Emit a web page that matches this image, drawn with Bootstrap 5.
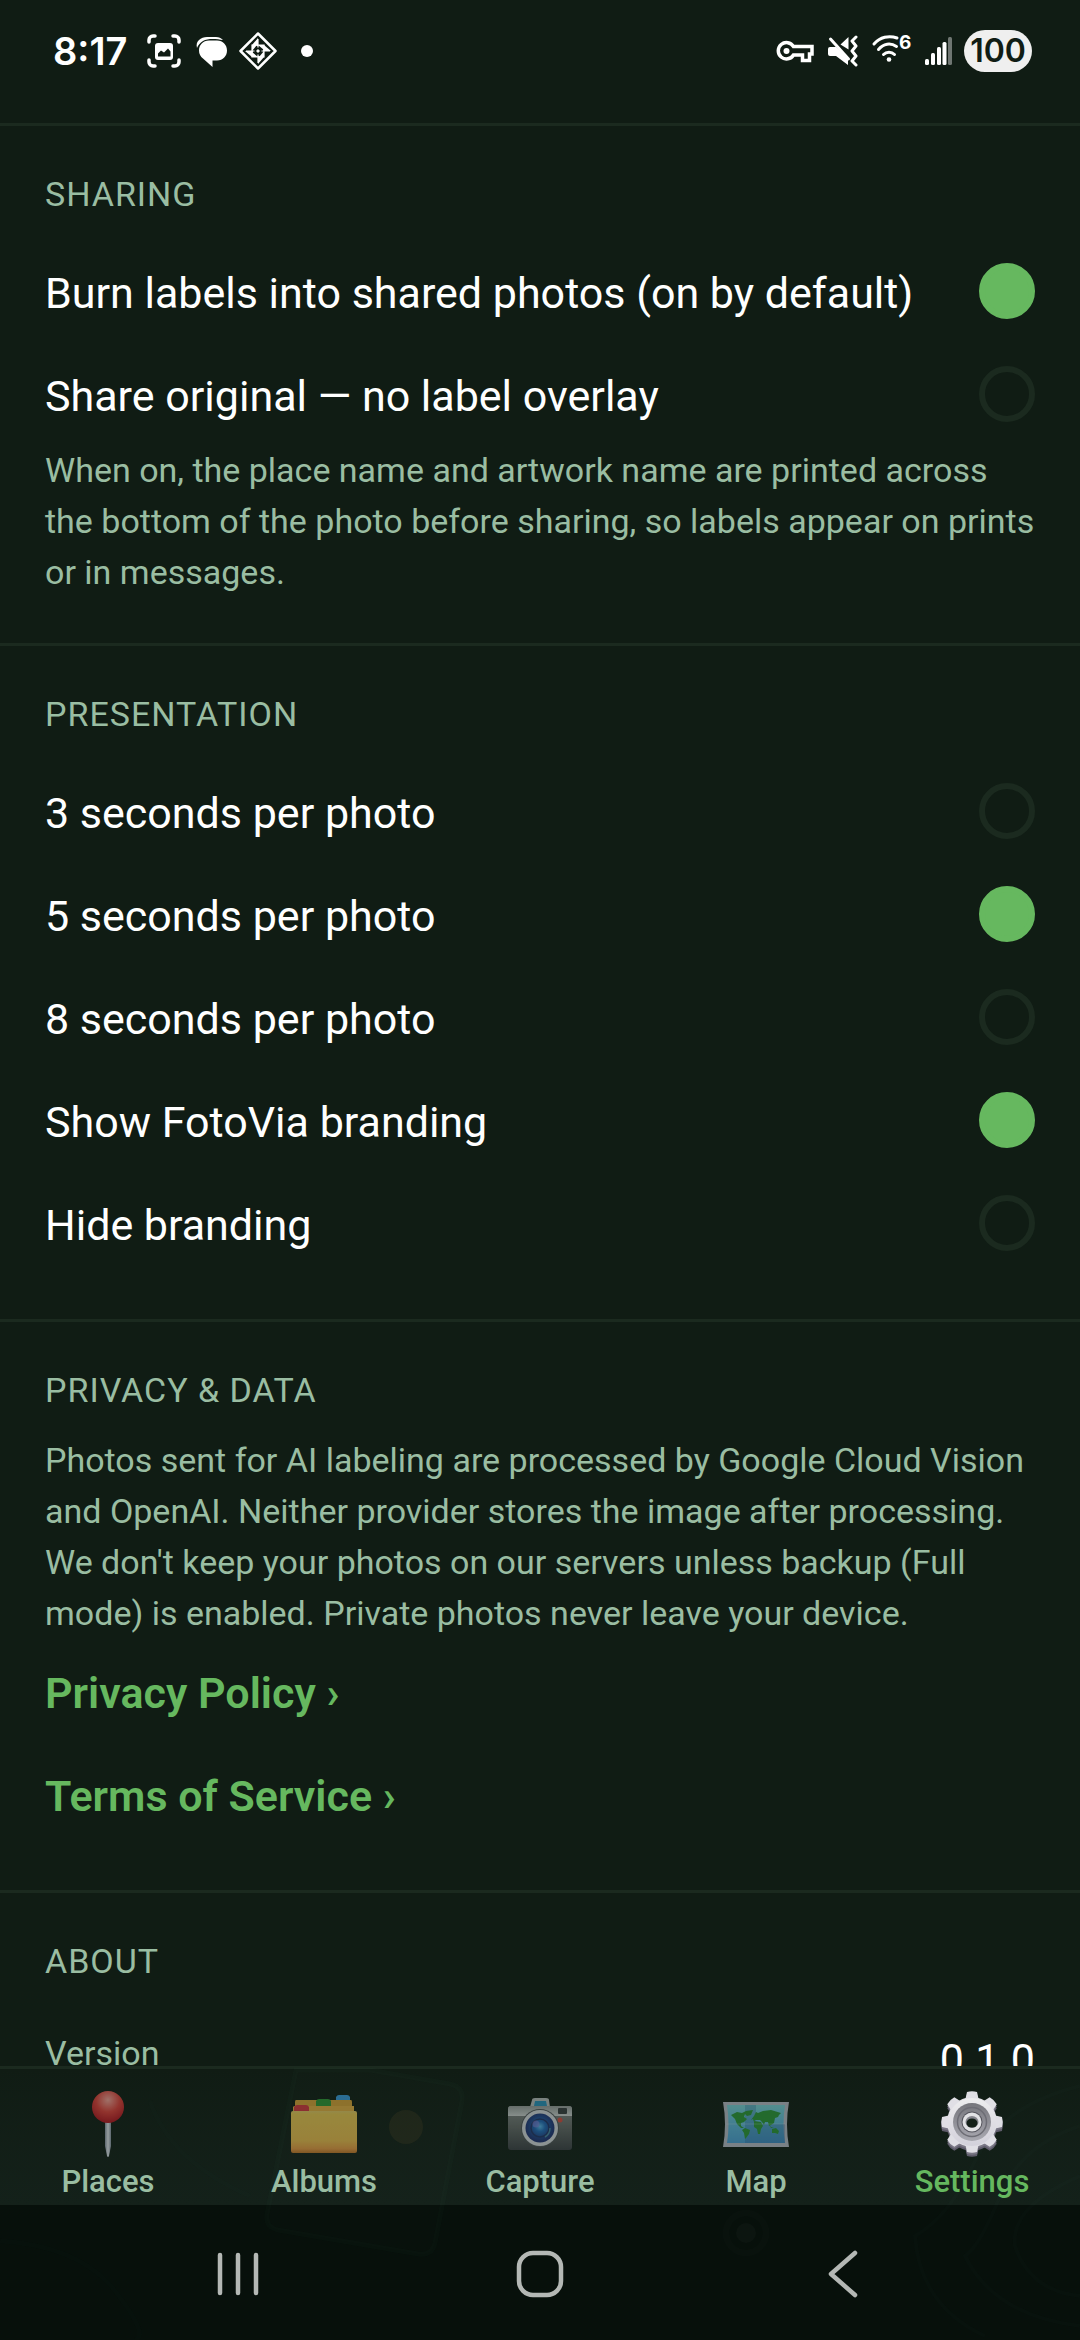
<!DOCTYPE html>
<html lang="en" data-bs-theme="dark">
<head>
<meta charset="utf-8">
<meta name="viewport" content="width=device-width, initial-scale=1">
<title>FotoVia – Settings</title>
<link rel="stylesheet" href="https://cdn.jsdelivr.net/npm/bootstrap@5.3.0/dist/css/bootstrap.min.css">
<style>
  :root { --ink: #101c14; --line: #1b2a1f; --sage: #9abda2; --leaf: #66b85f; }
  body { background: var(--ink); color: #fff; font-family: Roboto, "Noto Sans", sans-serif; }

  /* system status bar */
  .status { height: 123px; padding: 0 48px 21px 53px; font-family: Inter, Roboto, sans-serif; }
  .clock { font-size: 38px; line-height: 48px; font-weight: 600; width: 83px; }
  .status-left { gap: 10px; }
  .status-right { gap: 12px; }
  .more-dot { width: 12px; height: 12px; background: #fff; margin-left: 13px; }
  .battery { width: 68px; height: 42px; background: #efefef; color: var(--ink); font-size: 32px; line-height: 42px; font-weight: 600; }
  .wifi-gen { font: 700 19px Inter, sans-serif; }

  /* settings sections */
  .settings { min-height: 0; scrollbar-width: none; }
  .group { border: 0; border-top: 3px solid var(--line); padding: 48px 45px 45px; }
  .group-title { font-size: 34px; line-height: 40px; font-weight: 400; letter-spacing: 1px; color: var(--sage); margin: 0 0 25px; }
  .opt { height: 103px; font-size: 43px; line-height: 50px; }
  .opt-text { padding-top: 4px; }
  .opt .form-check-input { width: 56px; height: 56px; margin: 0; border: 6px solid var(--line); background-color: transparent; }
  .opt .form-check-input:checked { background-color: var(--leaf); border-color: var(--leaf); background-image: none; }
  .note { font-size: 34px; line-height: 51px; color: var(--sage); margin: 0; }
  .opt a { color: var(--leaf); font-weight: 600; }
  .info { padding: 28px 0; font-size: 43px; line-height: 50px; }
  .info dt { font-size: 34px; line-height: 38px; font-weight: 400; color: var(--sage); }
  .info dd { margin: 0; }

  /* bottom bars */
  .tabs { border-top: 3px solid var(--line); background: linear-gradient(#101c14, #14211a); }
  .tabs .nav-link { padding: 22px 0 5px; color: var(--sage); font-size: 31px; line-height: 36px; font-weight: 500; gap: 7px; }
  .tabs .nav-link svg { opacity: .6; }
  .tabs .nav-link.active { color: var(--leaf); }
  .tabs .nav-link.active svg { opacity: 1; }
  .sysnav { height: 135px; background: #07100b; }
  .sysnav button { width: 28%; background: none; border: 0; padding: 3px 0 0; }
  .backdrop { pointer-events: none; }
</style>
<script src="https://cdn.jsdelivr.net/npm/bootstrap@5.3.0/dist/js/bootstrap.bundle.min.js"></script>
</head>
<body>
<div class="d-flex flex-column vh-100 overflow-hidden">

  <header class="status d-flex justify-content-between align-items-center flex-shrink-0">
    <div class="status-left d-flex align-items-center">
      <span class="clock">8:17</span>
      <svg width="36" height="36" viewBox="0 0 36 36" fill="none" stroke="#fff" stroke-width="3.500" stroke-linecap="round" aria-hidden="true">
        <path d="M3 9V7a4 4 0 0 1 4-4h2M27 3h2a4 4 0 0 1 4 4v2M33 27v2a4 4 0 0 1-4 4h-2M9 33H7a4 4 0 0 1-4-4v-2"/>
        <rect x="9" y="10" width="18" height="17" rx="3" fill="#fff" stroke="none"/>
        <path d="M12 23.500v-3l3-3 3 2 4-4 2.500 3v5z" fill="#101c14" stroke="none"/>
      </svg>
      <svg width="36" height="36" viewBox="0 0 36 36" aria-hidden="true">
        <path fill="#fff" d="M5 15C3 8 9 4 15 4h9c3 0 5 1 7 3-6-1-15-2-20 1-3 2-5 4-6 7z"/>
        <path fill="#fff" d="M17 7.500h8c6 0 10 4.500 10 10s-4 10-10 10h-4.500V34L11 25.500C8.500 23.500 7 21 7 17.500c0-5.500 4-10 10-10z"/>
      </svg>
      <svg width="40" height="40" viewBox="0 0 40 40" aria-hidden="true">
        <path fill="none" stroke="#fff" stroke-width="2.500" stroke-linejoin="round" d="M20 2.500 37.500 20 20 37.500 2.500 20z"/>
        <path fill="none" stroke="#fff" stroke-width="1.200" d="M20 8v24M8 20h24M14 14h12v12H14z"/>
        <path fill="#fff" d="M20 7v8l-6-1zM33 20h-8l1-6zM20 33v-8l6 1zM7 20h8l-1 6zM14 20v-6h5zM20 14h6v5zM26 20v6h-5zM20 26h-6v-5z"/>
        <path fill="#101c14" d="M20 16l4 4-4 4-4-4z"/><path fill="#fff" d="M20 18l2 2-2 2-2-2z"/>
      </svg>
      <span class="more-dot rounded-circle"></span>
    </div>
    <div class="status-right d-flex align-items-center">
      <svg width="38" height="36" viewBox="0 0 38 36" fill="none" stroke="#fff" stroke-width="3.500" aria-hidden="true">
        <path d="M17.500 13.500H36V21h-2.500v6.500h-7V22H17.500A8.200 8.200 0 1 1 17.500 13.500z"/><circle cx="10.500" cy="18" r="3" fill="#fff" stroke="none"/>
      </svg>
      <svg width="32" height="36" viewBox="0 0 32 36" aria-hidden="true">
        <path fill="#fff" d="M2 16q0-2 2-2h6l12 11v7L10 23H4q-2 0-2-2zM14.500 11.500 22.500 4v12.500z"/>
        <path fill="none" stroke="#fff" stroke-width="3" stroke-linecap="round" d="M4.500 6l18 20"/>
        <path fill="none" stroke="#fff" stroke-width="3" stroke-linecap="round" stroke-linejoin="round" d="M30 4l-4 4 4 5-4 5 4 5-4 5 4 4"/>
      </svg>
      <svg class="overflow-visible" width="40" height="36" viewBox="0 0 40 36" fill="none" stroke="#fff" stroke-width="3" stroke-linecap="round" aria-hidden="true">
        <path d="M4 11C10 4 19 2 27 5M8.500 16.500c5-6 12-7 18-3M13.500 21.500c3-3 8-3 11 0"/>
        <circle cx="19" cy="26.500" r="2.300" fill="#fff" stroke="none"/>
        <text class="wifi-gen" x="29" y="16" fill="#fff" stroke="none">6</text>
      </svg>
      <svg width="30" height="36" viewBox="0 0 30 36" fill="#fff" aria-hidden="true">
        <rect x="3" y="26" width="4" height="6" rx="1.500"/><rect x="9" y="20" width="4" height="12" rx="1.500"/><rect x="15" y="14" width="4" height="18" rx="1.500"/><rect x="20.500" y="9" width="4" height="23" rx="1.500"/><rect x="26" y="4" width="4" height="28" rx="1.500" opacity=".4"/>
      </svg>
      <span class="battery rounded-pill text-center">100</span>
    </div>
  </header>

  <main class="settings flex-grow-1 overflow-auto">
    <fieldset class="group">
      <h2 class="group-title">SHARING</h2>
      <label class="opt d-flex justify-content-between align-items-center"><span class="opt-text">Burn labels into shared photos (on by default)</span><input class="form-check-input flex-shrink-0" type="radio" name="share" checked></label>
      <label class="opt d-flex justify-content-between align-items-center"><span class="opt-text">Share original — no label overlay</span><input class="form-check-input flex-shrink-0" type="radio" name="share"></label>
      <p class="note">When on, the place name and artwork name are printed across the bottom of the photo before sharing, so labels appear on prints or in messages.</p>
    </fieldset>

    <fieldset class="group">
      <h2 class="group-title">PRESENTATION</h2>
      <label class="opt d-flex justify-content-between align-items-center"><span class="opt-text">3 seconds per photo</span><input class="form-check-input flex-shrink-0" type="radio" name="pace"></label>
      <label class="opt d-flex justify-content-between align-items-center"><span class="opt-text">5 seconds per photo</span><input class="form-check-input flex-shrink-0" type="radio" name="pace" checked></label>
      <label class="opt d-flex justify-content-between align-items-center"><span class="opt-text">8 seconds per photo</span><input class="form-check-input flex-shrink-0" type="radio" name="pace"></label>
      <label class="opt d-flex justify-content-between align-items-center"><span class="opt-text">Show FotoVia branding</span><input class="form-check-input flex-shrink-0" type="radio" name="brand" checked></label>
      <label class="opt d-flex justify-content-between align-items-center"><span class="opt-text">Hide branding</span><input class="form-check-input flex-shrink-0" type="radio" name="brand"></label>
    </fieldset>

    <section class="group">
      <h2 class="group-title">PRIVACY &amp; DATA</h2>
      <p class="note">Photos sent for AI labeling are processed by Google Cloud Vision and OpenAI. Neither provider stores the image after processing. We don't keep your photos on our servers unless backup (Full mode) is enabled. Private photos never leave your device.</p>
      <div class="opt d-flex align-items-center"><a class="opt-text text-decoration-none" href="#privacy">Privacy Policy ›</a></div>
      <div class="opt d-flex align-items-center"><a class="opt-text text-decoration-none" href="#terms">Terms of Service ›</a></div>
    </section>

    <section class="group">
      <h2 class="group-title">ABOUT</h2>
      <dl class="info d-flex justify-content-between align-items-start m-0"><dt>Version</dt><dd>0.1.0</dd></dl>
    </section>
  </main>

  <footer class="position-relative flex-shrink-0">
    <nav class="tabs nav nav-fill flex-nowrap" aria-label="Main">
      <a class="nav-link d-flex flex-column align-items-center w-100" href="#places">
        <svg width="66" height="66" viewBox="0 0 66 66" aria-hidden="true">
          <defs>
            <radialGradient id="ball" cx=".5" cy=".28" r=".75"><stop offset="0" stop-color="#ffa9a0"/><stop offset=".5" stop-color="#e8433e"/><stop offset="1" stop-color="#b3101f"/></radialGradient>
            <linearGradient id="pin"><stop offset="0" stop-color="#8d97a8"/><stop offset=".5" stop-color="#f0f4fb"/><stop offset="1" stop-color="#8d97a8"/></linearGradient>
          </defs>
          <path fill="url(#pin)" d="M30 29h6v26l-2 10q-1 2-2 0l-2-10z"/>
          <circle cx="33" cy="16" r="16" fill="url(#ball)"/>
        </svg>
        <span>Places</span>
      </a>
      <a class="nav-link d-flex flex-column align-items-center w-100" href="#albums">
        <svg width="66" height="66" viewBox="0 0 66 66" aria-hidden="true">
          <defs><linearGradient id="fold" x2="0" y2="1"><stop offset="0" stop-color="#ecd06a"/><stop offset=".08" stop-color="#f2cf55"/><stop offset=".7" stop-color="#f3c351"/><stop offset=".9" stop-color="#ef9f45"/><stop offset="1" stop-color="#c97a2c"/></linearGradient></defs>
          <path fill="#3ba0e6" d="M45 10V6q1-2 3-2h8q2 0 3 2v4z"/>
          <path fill="#e0a83a" d="M5 9h55q1 0 1 2v11H4V11q0-2 1-2z"/>
          <path fill="#2f9b38" d="M25 15v-5q1-2 3-2h9q2 0 3 2v5z"/>
          <path fill="#edb545" d="M3 15h60v7H2v-6z"/>
          <path fill="#dd3a41" d="M3 21v-5q1-2 3-2h9q2 0 3 2v5z"/>
          <rect y="20" width="66" height="42" rx="2" fill="url(#fold)"/>
        </svg>
        <span>Albums</span>
      </a>
      <a class="nav-link d-flex flex-column align-items-center w-100" href="#capture">
        <svg width="66" height="66" viewBox="0 0 66 66" aria-hidden="true">
          <defs>
            <linearGradient id="cam" x2="0" y2="1"><stop offset="0" stop-color="#8d9392"/><stop offset=".5" stop-color="#686d6c"/><stop offset="1" stop-color="#40444a"/></linearGradient>
            <linearGradient id="camtop" x2="0" y2="1"><stop offset="0" stop-color="#9da3a3"/><stop offset="1" stop-color="#d5d9d9"/></linearGradient>
            <radialGradient id="lens" cy=".45"><stop offset="0" stop-color="#5dbcf2"/><stop offset=".35" stop-color="#2470c0"/><stop offset=".7" stop-color="#244b94"/><stop offset="1" stop-color="#23367a"/></radialGradient>
          </defs>
          <path fill="#bfc5c6" d="M23 16l2-7q0-2 3-2h11q3 0 3 2l1 7z"/>
          <path fill="#2d99c4" d="M27 15l1-5h11l1 5z"/>
          <rect x="1" y="15" width="64" height="44" rx="3" fill="url(#cam)"/>
          <path fill="url(#camtop)" d="M1 25v-7q0-3 3-3h58q3 0 3 3v7z"/>
          <rect x="51" y="17" width="9" height="6" rx="1" fill="#3b4144"/>
          <circle cx="53" cy="29" r="2.500" fill="#dc5146"/>
          <circle cx="33" cy="37" r="19" fill="#555a5e"/>
          <circle cx="33" cy="37" r="18" fill="#dde1e6"/>
          <circle cx="33" cy="37" r="14.500" fill="url(#lens)"/>
          <circle cx="33" cy="37" r="9" fill="none" stroke="#24386f" stroke-width="1.500"/>
          <circle cx="29" cy="33" r="3.500" fill="#9089e6" opacity=".6"/>
          <path fill="none" stroke="#75d3c9" stroke-width="1.500" opacity=".5" d="M38 46q5-3 5-9"/>
        </svg>
        <span>Capture</span>
      </a>
      <a class="nav-link d-flex flex-column align-items-center w-100" href="#map">
        <svg width="66" height="66" viewBox="0 0 66 66" aria-hidden="true">
          <defs><linearGradient id="sea" x2="0" y2="1"><stop offset="0" stop-color="#7fd9df"/><stop offset=".5" stop-color="#63bfe2"/><stop offset="1" stop-color="#4fa6df"/></linearGradient></defs>
          <path fill="#bec3d0" d="M0 11h66q-4 22 0 45H0q4-23 0-45z"/>
          <path fill="url(#sea)" d="M4 14h58q-3 20 0 38H4q3-18 0-38z"/>
          <path fill="#1c4f91" opacity=".25" d="M22 14h11v38H22zM33 33h29v19H33z"/>
          <path fill="#2f9d3d" d="M8 24l6-3 5 1 4-2 7-1-2 5-4 1-2-2-1 3 3 2-3 3-3 1v3l3 2-3 0-4-4-2-5zM22 37l5 2-1 4-3 4-1 1-1-6-2-3zM31 25l2-4 2 1 5-2 8-1 10 3-2 2-1 2-3 1-1 5-3 2-2 1-1-4-3 0-1 3-2-3-2-2-5 0-1 2-1-3-2 1zM31 30l7 1 2 4-2 3-1 5-2 0-1-5-3-2zM49 38l4-1 3 3-1 3-3-1-3 0zM46 34l2 2 3 1-3 0z"/>
          <path stroke="#e5f5ff" stroke-width="1" opacity=".25" d="M3 33h60"/>
        </svg>
        <span>Map</span>
      </a>
      <a class="nav-link active d-flex flex-column align-items-center w-100" href="#settings" aria-current="page">
        <svg width="66" height="66" viewBox="0 0 66 66" aria-hidden="true">
          <defs>
            <linearGradient id="steel" gradientUnits="userSpaceOnUse" x1="0" y1="0" x2="0" y2="62"><stop offset="0" stop-color="#f1f1f1"/><stop offset="1" stop-color="#cfcdd8"/></linearGradient>
            <linearGradient id="bowl" x2="0" y2="1"><stop offset="0" stop-color="#76767c"/><stop offset="1" stop-color="#a9a9b1"/></linearGradient>
            <g id="cog">
              <circle cx="33" cy="31" r="25"/>
              <g id="cogteeth"><path id="tooth" d="M26 10l2-9q5-1.500 10 0l2 9v42l-2 9q-5 1.500-10 0l-2-9z"/><use href="#tooth" transform="rotate(90 33 31)"/></g>
              <use href="#cogteeth" transform="rotate(45 33 31)"/>
            </g>
          </defs>
          <use href="#cog" y="4" fill="#5f5c6b"/>
          <use href="#cog" y="2" fill="#7a7785"/>
          <use href="#cog" fill="#e0dfe5"/>
          <circle cx="33" cy="31" r="24" fill="url(#steel)"/>
          <circle cx="33" cy="31" r="19" fill="url(#bowl)"/>
          <circle cx="33" cy="31" r="14.500" fill="none" stroke="#6d6d75" stroke-width="1.500"/>
          <circle cx="33" cy="31" r="10.500" fill="#55555d"/>
          <circle cx="33" cy="31" r="9.500" fill="#e2e2e5"/>
          <ellipse cx="33" cy="31" rx="6.500" ry="6" fill="#85858d"/>
          <ellipse cx="33" cy="32" rx="5.500" ry="4.500" fill="#142018"/>
        </svg>
        <span>Settings</span>
      </a>
    </nav>

    <div class="sysnav d-flex justify-content-center align-items-center">
      <button type="button" aria-label="Recents"><svg width="48" height="48" viewBox="0 0 48 48" stroke="#b4b8b5" stroke-width="4.500" stroke-linecap="round"><path d="M6 5v38M24 5v38M42 5v38"/></svg></button>
      <button type="button" aria-label="Home"><svg width="48" height="48" viewBox="0 0 48 48" fill="none" stroke="#b4b8b5" stroke-width="4.500"><rect x="3" y="3" width="42" height="42" rx="14"/></svg></button>
      <button type="button" aria-label="Back"><svg width="48" height="48" viewBox="0 0 48 48" fill="none" stroke="#b4b8b5" stroke-width="4.500" stroke-linecap="round" stroke-linejoin="round"><path d="M37 3 13 24l24 21"/></svg></button>
    </div>

    <!-- faint map-and-photo wallpaper showing through both bars -->
    <svg class="backdrop position-absolute top-0 start-0 w-100 h-100" viewBox="0 0 1080 274" preserveAspectRatio="xMidYMax slice" fill="none" aria-hidden="true">
      <path d="M296 4L267 148q-2 13 11 16l140 24q14 2 17-11l27-142q2-14-12-17L370 4z" fill="#fff" fill-opacity=".008" stroke="#5fa58a" stroke-opacity=".025" stroke-width="5"/>
      <circle cx="406" cy="61" r="17" fill="#c08a3a" fill-opacity=".08"/>
      <circle cx="746" cy="167" r="10" fill="#fff" fill-opacity=".025"/>
      <circle cx="746" cy="167" r="20" stroke="#fff" stroke-opacity=".01" stroke-width="7"/>
      <path d="M1080 20Q1000 40 975 95T915 170q5 70 70 100M1080 60q-60 20-80 70t-35 60q30 60 115 70M1080 110q-70 30-65 70 15 45 65 50" stroke="#7fd0a0" stroke-opacity=".014" stroke-width="4"/>
      <path d="M0 175q80 5 115 50t20 49M150 35q20 60 100 95" stroke="#7fd0a0" stroke-opacity=".012" stroke-width="5"/>
    </svg>
  </footer>
</div>
</body>
</html>
